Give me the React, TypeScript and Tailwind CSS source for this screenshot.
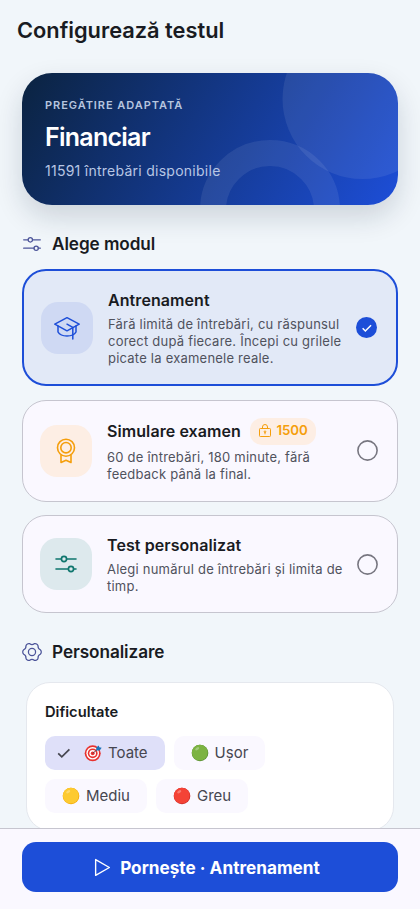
import { useState } from "react";
import type { ReactNode } from "react";

interface IconProps {
  className?: string;
}

function SlidersIcon({ className }: IconProps) {
  return (
    <svg
      viewBox="0 0 24 24"
      fill="none"
      stroke="currentColor"
      strokeLinecap="round"
      className={className}
    >
      <path d="M2 7h5.5M12.5 7h9.5M2 17h12.5M19.5 17h2.5" />
      <circle cx="10" cy="7" r="2.6" />
      <circle cx="17" cy="17" r="2.6" />
    </svg>
  );
}

function CapIcon({ className }: IconProps) {
  return (
    <svg
      viewBox="0 0 26 26"
      fill="none"
      stroke="currentColor"
      strokeWidth="1.5"
      strokeLinejoin="round"
      strokeLinecap="round"
      className={className}
    >
      <path d="M13 2.7 .8 9.2 13 15.8 25.2 9.2Z" />
      <path d="M4 11v6c1.5 2.6 5 4 9 4s7.5-1.4 9-4v-6" />
      <path d="M13 9.2 18.8 12.4V24" />
    </svg>
  );
}

function RibbonIcon({ className }: IconProps) {
  return (
    <svg
      viewBox="0 0 26 26"
      fill="none"
      stroke="currentColor"
      strokeWidth="1.6"
      strokeLinejoin="round"
      className={className}
    >
      <circle cx="13" cy="9.7" r="8.5" />
      <circle cx="13" cy="9.7" r="5.2" />
      <path d="M8 17v7.5l5-2.2 5 2.2V17" />
    </svg>
  );
}

function GearIcon({ className }: IconProps) {
  return (
    <svg
      viewBox="0 0 24 24"
      fill="none"
      stroke="currentColor"
      strokeWidth="1.5"
      strokeLinejoin="round"
      className={className}
    >
      <path d="M21.95 9.33A3.6 3.6 0 0 1 21.95 14.67A4.5 4.5 0 0 0 19.28 19.28A3.6 3.6 0 0 1 14.67 21.95A4.5 4.5 0 0 0 9.33 21.95A3.6 3.6 0 0 1 4.72 19.28A4.5 4.5 0 0 0 2.05 14.67A3.6 3.6 0 0 1 2.05 9.33A4.5 4.5 0 0 0 4.72 4.72A3.6 3.6 0 0 1 9.33 2.05A4.5 4.5 0 0 0 14.67 2.05A3.6 3.6 0 0 1 19.28 4.72A4.5 4.5 0 0 0 21.95 9.33Z" />
      <circle cx="12" cy="12" r="4.3" />
    </svg>
  );
}

function LockIcon({ className }: IconProps) {
  return (
    <svg
      viewBox="0 0 14 14"
      fill="none"
      stroke="currentColor"
      strokeWidth="1"
      strokeLinejoin="round"
      className={className}
    >
      <rect x="1.5" y="4.5" width="11" height="8" rx="0.8" />
      <path d="M4.5 4.5V3a2.5 2.5 0 0 1 5 0v1.5" />
      <path d="M7 8v2.3" />
      <circle cx="7" cy="7.7" r="0.8" />
    </svg>
  );
}

function CheckIcon({ className }: IconProps) {
  return (
    <svg viewBox="0 0 16 16" fill="none" stroke="currentColor" className={className}>
      <path d="m2.2 8.3 3.6 3.6 7.6-7.6" />
    </svg>
  );
}

function TargetIcon() {
  return (
    <svg viewBox="0 0 18 18" className="h-[18px] w-[18px]">
      <circle cx="8.7" cy="9.3" r="8" fill="#e8322f" />
      <circle cx="8.7" cy="9.3" r="6.3" fill="#fff" />
      <circle cx="8.7" cy="9.3" r="4.9" fill="#e8322f" />
      <circle cx="8.7" cy="9.3" r="3.3" fill="#fff" />
      <circle cx="8.7" cy="9.3" r="1.9" fill="#e8322f" />
      <path d="m8.7 9.3 5-4" stroke="#5b3b45" strokeWidth="0.9" />
      <path d="m12.2 6.5.1-3 2.4-2 .6 1.8 2.4.5-2 2.7z" fill="#1e73b8" />
    </svg>
  );
}

function Dot({ color, shade }: { color: string; shade: string }) {
  return (
    <svg viewBox="0 0 18 18" className="h-[18px] w-[18px]">
      <circle cx="9" cy="9" r="8.3" fill={shade} />
      <circle cx="8.8" cy="8.7" r="7.9" fill={color} />
      <ellipse
        cx="6.2"
        cy="4.7"
        rx="2.3"
        ry="1.3"
        fill="#fff"
        opacity="0.3"
        transform="rotate(-35 6.2 4.7)"
      />
    </svg>
  );
}

interface Mode {
  id: string;
  title: string;
  lines: string[];
  price?: number;
  height: string;
  tile: string;
  icon: ReactNode;
}

const modes: Mode[] = [
  {
    id: "training",
    title: "Antrenament",
    lines: [
      "Fără limită de întrebări, cu răspunsul",
      "corect după fiecare. Începi cu grilele",
      "picate la examenele reale.",
    ],
    height: "h-[117px]",
    tile: "bg-[#cfd9f3] text-[#1d4ed8]",
    icon: <CapIcon className="h-[26px] w-[26px]" />,
  },
  {
    id: "exam",
    title: "Simulare examen",
    lines: ["60 de întrebări, 180 minute, fără", "feedback până la final."],
    price: 1500,
    height: "h-[102px]",
    tile: "bg-[#fdeee4] text-[#f59e0b]",
    icon: <RibbonIcon className="h-[26px] w-[26px]" />,
  },
  {
    id: "custom",
    title: "Test personalizat",
    lines: ["Alegi numărul de întrebări și limita de", "timp."],
    height: "h-[98px]",
    tile: "bg-[#dde9ed] text-[#0f766e]",
    icon: <SlidersIcon className="h-6 w-6 stroke-[1.6]" />,
  },
];

const difficulties = [
  { label: "Toate", icon: <TargetIcon /> },
  { label: "Ușor", icon: <Dot color="#7cb342" shade="#558b2f" /> },
  { label: "Mediu", icon: <Dot color="#fdca30" shade="#f2a600" /> },
  { label: "Greu", icon: <Dot color="#f44336" shade="#c62828" /> },
];

function SectionTitle({ icon, children }: { icon: ReactNode; children: ReactNode }) {
  return (
    <div className="flex h-6 items-center gap-[10px] text-[#4c5499]">
      {icon}
      <h2 className="text-[17.2px] leading-6 font-semibold tracking-[-0.08px] text-[#191b22]">
        {children}
      </h2>
    </div>
  );
}

function ModeCard({
  mode,
  selected,
  onSelect,
}: {
  mode: Mode;
  selected: boolean;
  onSelect: () => void;
}) {
  return (
    <button
      onClick={onSelect}
      className={`flex w-full items-center rounded-[24px] pr-[19px] pl-[17px] text-left ${mode.height} ${
        selected
          ? "border-2 border-[#1d4ed8] bg-[#e2e9f7]"
          : "border border-[#c6c5cf] bg-[#faf8ff]"
      }`}
    >
      <div
        className={`flex h-[52px] w-[52px] shrink-0 items-center justify-center rounded-[17px] ${mode.tile}`}
      >
        {mode.icon}
      </div>
      <div className="ml-[15px] flex-1 whitespace-nowrap">
        <div className="flex items-center gap-[9px]">
          <span className="text-[16px] leading-6 font-semibold tracking-[0.08px] text-[#191b22]">
            {mode.title}
          </span>
          {mode.price && (
            <span className="flex h-[27px] items-center gap-1 rounded-[12px] bg-[#fdeee4] px-[8.5px] text-[13.3px] font-semibold tracking-[-0.1px] text-[#f59e0b]">
              <LockIcon className="h-[14px] w-[14px]" />
              {mode.price}
            </span>
          )}
        </div>
        <p className="mt-1 text-[13px] leading-[17.3px] tracking-[0.22px] text-[#50525d]">
          {mode.lines.map((line) => (
            <span key={line} className="block">
              {line}
            </span>
          ))}
        </p>
      </div>
      {selected ? (
        <span className="flex h-[21px] w-[21px] shrink-0 items-center justify-center rounded-full bg-[#1d4ed8] text-white">
          <CheckIcon className="h-3 w-3 stroke-[2]" />
        </span>
      ) : (
        <svg viewBox="0 0 21 21" className="h-[21px] w-[21px] shrink-0">
          <circle cx="10.5" cy="10.5" r="9.6" fill="none" stroke="#777680" strokeWidth="1.6" />
        </svg>
      )}
    </button>
  );
}

export default function App() {
  const [mode, setMode] = useState("training");
  const [difficulty, setDifficulty] = useState("Toate");
  const current = modes.find((m) => m.id === mode);

  return (
    <div className="flex h-[909px] w-[420px] flex-col overflow-hidden bg-[#f1f6fa] font-['Inter',sans-serif]">
      <main className="min-h-0 flex-1 overflow-hidden px-[22px]">
        <h1 className="-ml-[5px] pt-4 text-[21.8px] leading-7 font-semibold text-[#191b22]">
          Configurează testul
        </h1>

        <section className="relative mt-[29px] h-[132px] rounded-[30px] bg-linear-[120deg,#0b2340_0%,#1d4ed8_100%] pt-[23px] pl-[23px] shadow-[0_12px_28px_rgba(11,31,58,0.16)]">
          <svg
            viewBox="0 0 376 132"
            className="absolute inset-0 h-full w-full rounded-[30px]"
          >
            <circle cx="340.5" cy="26" r="80" fill="#fff" opacity="0.08" />
            <circle
              cx="248"
              cy="137"
              r="57"
              fill="none"
              stroke="#fff"
              strokeWidth="26"
              opacity="0.08"
            />
          </svg>
          <div className="relative">
            <p className="text-[11px] leading-[18px] font-semibold tracking-[0.95px] text-[#b6c5df]">
              PREGĂTIRE ADAPTATĂ
            </p>
            <p className="mt-[6px] text-[25px] leading-[34px] font-semibold tracking-[-0.75px] text-white">
              Financiar
            </p>
            <p className="mt-[7px] text-[14px] leading-5 tracking-[0.26px] text-[#b8c6e4]">
              11591 întrebări disponibile
            </p>
          </div>
        </section>

        <div className="mt-[27px]">
          <SectionTitle icon={<SlidersIcon className="h-5 w-5 stroke-[1.5]" />}>
            Alege modul
          </SectionTitle>
        </div>

        <div className="mt-[13px] flex flex-col gap-[13.5px]">
          {modes.map((m) => (
            <ModeCard
              key={m.id}
              mode={m}
              selected={m.id === mode}
              onSelect={() => setMode(m.id)}
            />
          ))}
        </div>

        <div className="mt-[27px]">
          <SectionTitle icon={<GearIcon className="h-5 w-5" />}>
            Personalizare
          </SectionTitle>
        </div>

        <section className="mx-1 mt-[18px] h-[149px] rounded-[24px] border border-[#e5e8ee] bg-white px-[18px] pt-[19px]">
          <h3 className="text-[14.7px] leading-5 font-semibold text-[#191b22]">Dificultate</h3>
          <div className="mt-[14px] flex flex-wrap gap-[9px]">
            {difficulties.map(({ label, icon }) => (
              <button
                key={label}
                onClick={() => setDifficulty(label)}
                className={`flex h-[34px] items-center gap-[6px] rounded-[10px] text-[15px] text-[#464650] ${
                  label === difficulty
                    ? "bg-[#dfe0f9] pr-[17px] pl-[11px]"
                    : "bg-[#faf8ff] px-[17px]"
                }`}
              >
                {label === difficulty && (
                  <CheckIcon className="mr-[6px] h-4 w-4 stroke-[1.7]" />
                )}
                {icon}
                {label}
              </button>
            ))}
          </div>
        </section>
      </main>

      <footer className="h-[81px] shrink-0 border-t border-[#c6c5cf] bg-[#faf8ff] px-[22px] pt-[13px]">
        <button className="flex h-[50px] w-full items-center justify-center gap-[8px] rounded-[14px] bg-[#1d4ed8] pt-[2px] pr-[7px] text-[17.2px] font-bold text-white">
          <svg
            viewBox="0 0 18 18"
            fill="none"
            stroke="currentColor"
            strokeWidth="1.3"
            strokeLinejoin="round"
            className="mb-[2px] h-[19px] w-[19px]"
          >
            <path d="M2.5 1.5v15L15.5 9z" />
          </svg>
          Pornește · {current?.title}
        </button>
      </footer>
    </div>
  );
}
